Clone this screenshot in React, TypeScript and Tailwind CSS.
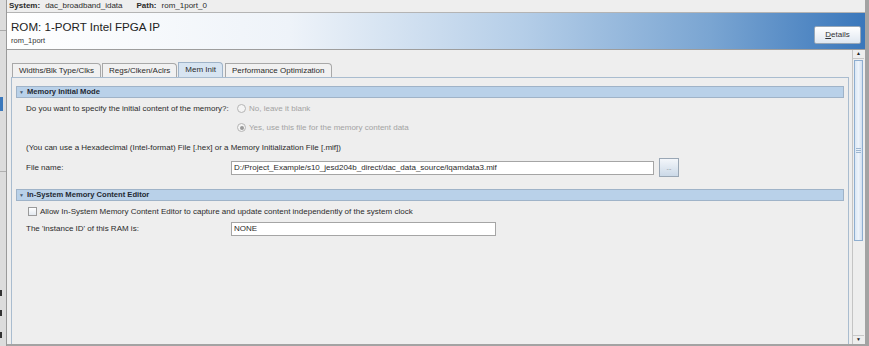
import React from "react";

/* Quartus-style IP parameter editor: ROM 1-PORT, Mem Init tab */

const TABS = ["Widths/Blk Type/Clks", "Regs/Clken/Aclrs", "Mem Init", "Performance Optimization"];

function SectionHeader({ title }: { title: string }) {
  return (
    <div className="flex items-center h-[12px] bg-[#b9d1e9] border border-[#9fb3c8] pl-[2px]">
      <span className="text-[5px] leading-none text-[#4b5e73] mr-[3px]">▼</span>
      <span className="font-bold text-[7.6px] text-[#1f2933]">{title}</span>
    </div>
  );
}

function Radio({ label, checked }: { label: string; checked?: boolean }) {
  return (
    <div className="flex items-center gap-[3px] text-[#a3a3a3]">
      <span className="w-[9px] h-[9px] rounded-full border border-[#b5b5b5] bg-[#f4f4f4] flex items-center justify-center">
        {checked && <span className="w-[4px] h-[4px] rounded-full bg-[#9a9a9a]" />}
      </span>
      <span>{label}</span>
    </div>
  );
}

export default function App() {
  return (
    <div className="w-[869px] h-[346px] overflow-hidden flex bg-[#eeeeee] font-['Liberation_Sans',Arial,sans-serif] text-[8px] text-[#2b2b2b]">
      {/* sliver of neighbouring window */}
      <div className="w-[7px] flex flex-col bg-[#dcdcdc] border-r border-[#9a9a9a]">
        <div className="h-[30px]" />
        <div className="h-[1px] bg-[#aaaaaa]" />
        <div className="h-[66px]" />
        <div className="h-[14px] w-[3px] bg-[#3a78bc]" />
        <div className="h-[60px]" />
        <div className="h-[1px] bg-[#b0b0b0]" />
        <div className="h-[118px]" />
        <div className="h-[6px] w-[2px] bg-[#333]" />
        <div className="h-[14px]" />
        <div className="h-[6px] w-[2px] bg-[#333]" />
        <div className="h-[16px]" />
        <div className="h-[6px] w-[2px] bg-[#333]" />
      </div>

      <div className="flex-1 flex flex-col border-r-[4px] border-[#a3a3a3] border-b-[2px]">
        {/* system / path bar */}
        <div className="h-[13px] flex items-center gap-[14px] pl-[2px] border-b border-[#b4b4b4] bg-[#eeeeee]">
          <span>
            <b>System:</b>
            <span className="ml-[5px]">dac_broadband_idata</span>
          </span>
          <span>
            <b>Path:</b>
            <span className="ml-[5px]">rom_1port_0</span>
          </span>
        </div>

        {/* header */}
        <div className="h-[37px] flex items-end justify-between pl-[4px] pr-[4px] pb-[3px] border-b border-[#9d9d9d] bg-[linear-gradient(to_right,#ffffff_0%,#eef3f9_33%,#b5cee8_60%,#7aa5d2_82%,#3a77bb_100%)]">
          <div className="flex flex-col self-start pt-[7px]">
            <span className="text-[11.6px] leading-[13px] text-[#222]">ROM: 1-PORT Intel FPGA IP</span>
            <span className="text-[7.5px] leading-[10px] mt-[3px] text-[#333]">rom_1port</span>
          </div>
          <button className="w-[47px] h-[18px] mb-[2px] border border-[#98a7b7] rounded-[2px] bg-[linear-gradient(to_bottom,#ffffff,#dfe7f0)] text-[8px] text-[#333]">
            <span className="underline">D</span>etails
          </button>
        </div>

        {/* scroll area */}
        <div className="flex-1 flex">
          <div className="flex-1 pl-[4px] pr-[3px] pt-[12px] flex flex-col">
            {/* tabs */}
            <div className="flex h-[15px] pl-[1px] items-end">
              {TABS.map((t) => {
                const active = t === "Mem Init";
                return (
                  <div
                    key={t}
                    className={
                      active
                        ? "h-[15px] px-[6px] mr-[2px] flex items-center border border-b-0 border-[#9fb3c8] rounded-tr-[4px] bg-[#d7e4f1] text-[#2b2b2b]"
                        : "h-[14px] px-[6px] mr-[1px] flex items-center border border-b-0 border-[#a8a8a8] rounded-tr-[4px] bg-[#f1f1f1] text-[#2b2b2b]"
                    }
                  >
                    {t}
                  </div>
                );
              })}
            </div>

            {/* tab body */}
            <div className="flex-1 border border-[#a9bccf] border-b-0 px-[4px] pt-[8px] flex flex-col">
              <SectionHeader title="Memory Initial Mode" />

              <div className="flex items-center mt-[4px] h-[13px] pl-[10px]">
                <span className="w-[211px]">Do you want to specify the initial content of the memory?:</span>
                <Radio label="No, leave it blank" />
              </div>
              <div className="flex items-center mt-[6px] h-[13px] pl-[221px]">
                <Radio label="Yes, use this file for the memory content data" checked />
              </div>

              <div className="mt-[7px] h-[13px] flex items-center pl-[10px]">
                (You can use a Hexadecimal (Intel-format) File [.hex] or a Memory Initialization File [.mif])
              </div>

              <div className="flex items-center mt-[4px] h-[19px] pl-[10px]">
                <span className="w-[205px]">File name:</span>
                <div className="w-[423px] h-[14px] bg-white border border-[#a5a5a5] flex items-center pl-[2px]">
                  D:/Project_Example/s10_jesd204b_direct/dac_data_source/lqamdata3.mif
                </div>
                <button className="ml-[5px] w-[20px] h-[19px] border border-[#9aa7b5] bg-[linear-gradient(to_bottom,#f3f6fa,#cbd9e8)] text-[6px] text-[#555] leading-none">
                  ...
                </button>
              </div>

              <div className="mt-[12px]">
                <SectionHeader title="In-System Memory Content Editor" />
              </div>

              <div className="flex items-center mt-[4px] h-[13px] pl-[12px] gap-[3px]">
                <span className="w-[9px] h-[9px] border border-[#9a9a9a] bg-[linear-gradient(to_bottom,#ffffff,#e3e9f0)]" />
                <span>Allow In-System Memory Content Editor to capture and update content independently of the system clock</span>
              </div>

              <div className="flex items-center mt-[4px] h-[14px] pl-[10px]">
                <span className="w-[205px]">The 'instance ID' of this RAM is:</span>
                <div className="w-[265px] h-[14px] bg-white border border-[#a5a5a5] flex items-center pl-[2px]">NONE</div>
              </div>
            </div>
          </div>

          {/* vertical scrollbar */}
          <div className="w-[12px] mr-[1px] flex flex-col border-l border-[#c4c4c4] bg-[#eeeeee]">
            <div className="h-[9px] flex items-center justify-center text-[5px] text-[#222] border-b border-[#c8c8c8]">▲</div>
            <div className="h-[181px] mx-[1px] mt-[1px] border border-[#8eaed0] bg-[linear-gradient(to_right,#dbe7f4,#eef4fb,#cfdff0)] flex items-center justify-center">
              <div className="w-[5px] flex flex-col gap-[1px]">
                <div className="h-[1px] bg-[#9db6d0]" />
                <div className="h-[1px] bg-[#9db6d0]" />
                <div className="h-[1px] bg-[#9db6d0]" />
              </div>
            </div>
            <div className="flex-1" />
            <div className="h-[9px] flex items-center justify-center text-[5px] text-[#222] border-t border-[#c8c8c8]">▼</div>
          </div>
        </div>
      </div>
    </div>
  );
}
